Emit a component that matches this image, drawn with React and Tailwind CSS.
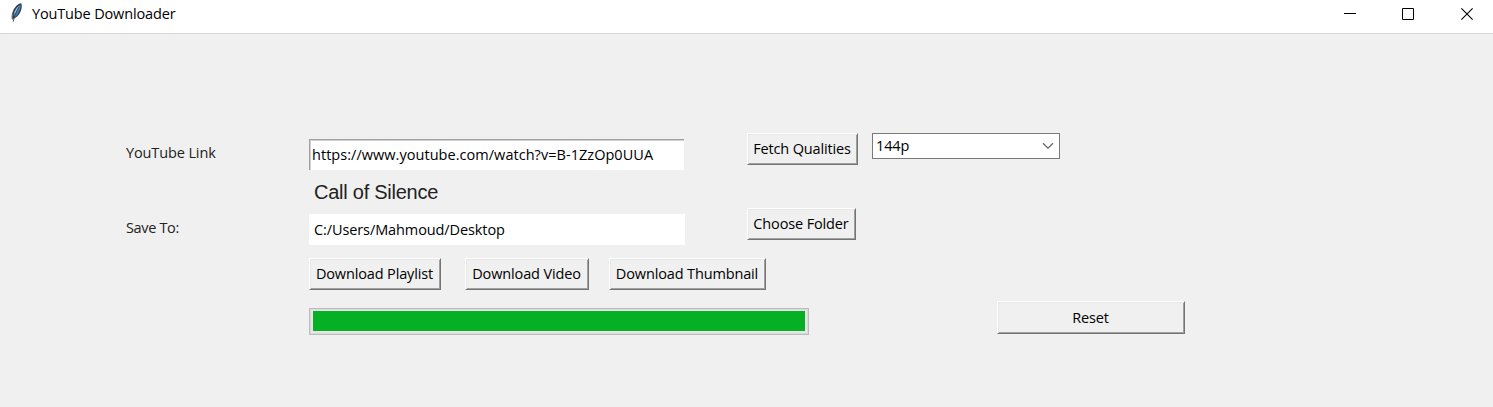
import React from "react";

function Button({ children, className = "" }) {
  return (
    <button
      className={`flex shrink-0 items-center justify-center border border-t-white border-l-white border-r-[#757575] border-b-[#757575] bg-[#f0f0f0] pr-px whitespace-nowrap shadow-[inset_1px_1px_0_#e7e7e7,inset_-1px_-1px_0_#a0a0a0] ${className}`}
    >
      <span>{children}</span>
    </button>
  );
}

function Feather() {
  return (
    <svg width="14" height="20" viewBox="0 0 14 20" className="shrink-0">
      <path d="M11.2 .3C8 .8 4.6 4 3 8C1.8 11 1.3 14.4 2.3 16.2C6.1 15 9.3 12 10.7 8.3C11.9 5.4 12.2 2 11.2 .3Z" fill="#303a44" />
      <path d="M10.6 1.4C7.2 3.4 4.4 7 3.6 11.8L4.2 14.6C7.8 12 10.8 7.2 10.6 1.4Z" fill="#4482bd" />
      <path d="M9.2 2.8C6.2 4.9 4.4 8.2 3.8 11.6C6.2 9 8 6 9.2 2.8Z" fill="#9bbdd8" />
      <path d="M9 4C6.5 8.5 4.3 13 3.2 18.6" fill="none" stroke="#2e4052" strokeWidth=".9" />
      <path d="M2.3 11.5L2 15.4L3.3 17" fill="none" stroke="#85898c" strokeWidth="1" />
    </svg>
  );
}

export default function App() {
  return (
    <div className="flex h-[407px] w-[1493px] flex-col overflow-hidden bg-[#f0f0f0] font-['Open_Sans','Noto_Sans',sans-serif] text-[14.5px] leading-5 tracking-[-0.14px] text-black">
      <header className="flex h-[34px] shrink-0 items-start border-b border-[#d6d6d6] bg-white">
        <div className="flex flex-1 pt-[3px] pl-[10px]">
          <Feather />
          <h1 className="pl-2 text-[14.5px] leading-[22px] tracking-[-0.15px] whitespace-nowrap">YouTube Downloader</h1>
        </div>
        <div className="flex gap-[46px] pt-2 pr-5">
          <svg width="12" height="12" viewBox="0 0 12 12"><path d="M0 5.5H12" stroke="black" /></svg>
          <svg width="12" height="12" viewBox="0 0 12 12"><path d="M.5 .5h11v11H.5Z" fill="none" stroke="black" /></svg>
          <svg width="13" height="12" viewBox="0 0 13 12"><path d="M1.4 .4L12.6 11.6M12.6 .4L1.4 11.6" stroke="black" strokeWidth="1.1" /></svg>
        </div>
      </header>

      <main className="flex flex-col pt-[99px]">
        <div className="flex h-[37px] items-start">
          <div className="ml-[126px] w-[183px] pt-[10px] tracking-[-0.12px] text-[#222]"><span>YouTube Link</span></div>
          <div className="mt-[6px] flex h-[31px] w-[375px] items-center border-t border-l border-[#a0a0a0] bg-white pl-[2px] tracking-[0.04px] whitespace-nowrap shadow-[inset_1px_1px_0_#d0d0d0]">
            <span>https://www.youtube.com/watch?v=B-1ZzOp0UUA</span>
          </div>
          <Button className="ml-[63px] h-8 w-[111px]">Fetch Qualities</Button>
          <div className="ml-[14px] flex h-[26px] w-[188px] items-center justify-between border border-[#7a7a7a] bg-white pr-[5px] pl-[3px]">
            <span>144p</span>
            <svg width="12" height="8" viewBox="0 0 12 8"><path d="M1 1.2L6 6.2L11 1.2" fill="none" stroke="#666" strokeWidth="1.3" /></svg>
          </div>
        </div>

        <div className="h-[38px] pt-[10px] pl-[314px] font-['Liberation_Sans',Arial,sans-serif] text-[20px] leading-[24px] tracking-[-0.25px] text-[#222]"><span>Call of Silence</span></div>

        <div className="flex h-[50px] items-start">
          <div className="ml-[126px] w-[183px] pt-[10px] tracking-[-0.35px] text-[#222]"><span>Save To:</span></div>
          <div className="mt-[6px] flex h-[31px] w-[376px] items-center bg-white pt-px pl-[5px] tracking-[-0.1px]"><span>C:/Users/Mahmoud/Desktop</span></div>
          <Button className="ml-[62px] h-8 w-[109px]">Choose Folder</Button>
        </div>

        <div className="flex pl-[309px]">
          <Button className="h-8 w-[132px]">Download Playlist</Button>
          <Button className="ml-6 h-8 w-[124px]">Download Video</Button>
          <Button className="ml-5 h-8 w-[157px]">Download Thumbnail</Button>
        </div>

        <div className="flex items-start pt-[11px] pl-[309px]">
          <div className="mt-[7px] h-[27px] w-[500px] border border-[#bcbcbc] bg-[#e6e6e6] px-[3px] pt-[2px] pb-[3px] shadow-[inset_0_0_0_1px_#dadada]"><div className="h-full bg-[#06b025]" /></div>
          <Button className="ml-[188px] h-[33px] w-[188px]">Reset</Button>
        </div>
      </main>
    </div>
  );
}
